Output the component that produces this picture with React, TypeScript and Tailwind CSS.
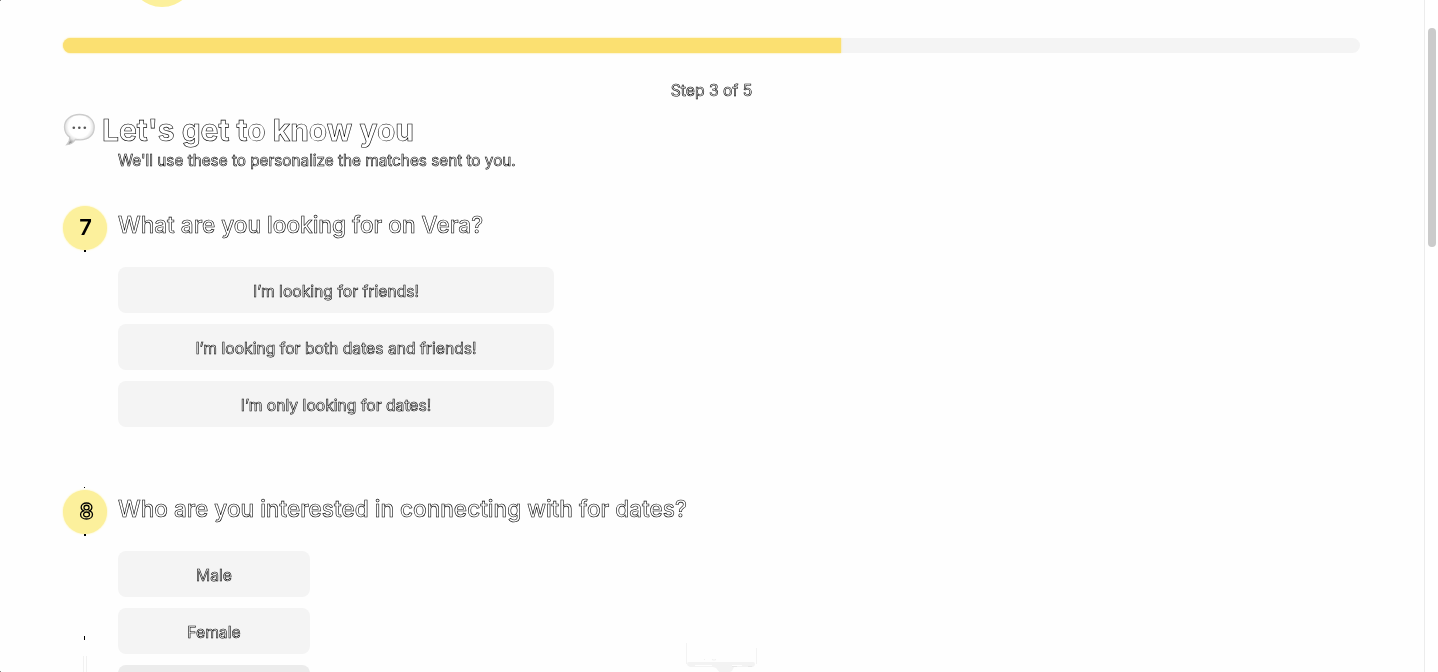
import type { ReactNode } from "react";

const outlineLarge = "text-white [-webkit-text-stroke:0.6px_#000000]";
const outlineSmall = "text-[#fafafa] [-webkit-text-stroke:0.6px_#000000]";

function SpeechBubble() {
  return (
    <svg width="34" height="34" viewBox="0 0 34 34" className="mt-[2px] shrink-0">
      <defs>
        <radialGradient id="bubble" cx="0.5" cy="0.4" r="0.6">
          <stop offset="0.6" stopColor="#ffffff" />
          <stop offset="0.8" stopColor="#e2e2e2" />
          <stop offset="1" stopColor="#999999" />
        </radialGradient>
      </defs>
      <path
        d="M16.500 1.5C8 1.5 1.5 6.8 1.5 14c0 4.700 2 8 5.300 10.100C7 27 5.800 29.500 3.800 31.700c3.600-.2 6.600-2 8.500-5.200 1.500.3 3 .4 4.700.4 9 0 14.200-5.400 14.200-12.700S25.500 1.500 16.500 1.500Z"
        fill="url(#bubble)"
        stroke="#cccccc"
        strokeWidth="1.300"
      />
      <circle cx="10.800" cy="14.800" r="1.300" fill="#555" />
      <circle cx="16.300" cy="14.800" r="1.300" fill="#555" />
      <circle cx="21.800" cy="14.800" r="1.300" fill="#555" />
    </svg>
  );
}

function Option({ label, dim = false }: { label: string; dim?: boolean }) {
  return (
    <button
      className={`flex h-[46px] w-full shrink-0 items-center justify-center rounded-lg pt-1 text-[15.7px] leading-6 font-normal ${dim ? "bg-[#ececec]" : "bg-[#f4f4f4]"}`}
    >
      <span className={outlineSmall}>{label}</span>
    </button>
  );
}

function Question({
  n,
  title,
  digit,
  marks,
  children,
}: {
  n: number;
  title: string;
  digit: string;
  marks: ReactNode;
  children: ReactNode;
}) {
  return (
    <section className="flex h-[284px] shrink-0 gap-[11px]">
      <div className="relative flex w-11 shrink-0 flex-col items-center">
        <div
          className={`mt-px flex h-11 w-11 items-center justify-center rounded-full bg-[#fcf09c] text-[22px] font-semibold shadow-[0_0_2px_#fcf09c] ${digit}`}
        >
          {n}
        </div>
        {marks}
      </div>
      <div className="flex flex-col">
        <h2 className="flex h-[40px] items-center text-[22.6px] font-medium whitespace-nowrap">
          <span className={outlineLarge}>{title}</span>
        </h2>
        <div className="mt-[22px] flex flex-col gap-[11px]">{children}</div>
      </div>
    </section>
  );
}

export default function App() {
  return (
    <div className="flex h-[672px] w-[1438px] overflow-hidden bg-[#fefefe] font-['Inter',sans-serif]">
      <main className="relative flex w-[1425px] shrink-0 flex-col overflow-hidden border-r border-[#ececec] pr-16 pl-[63px] will-change-transform">
        <div className="absolute top-[-59px] left-[129px] h-[66px] w-[66px] rounded-full bg-[#fcf09c]" />
        <div className="absolute top-[-1px] left-[-1px] h-[2px] w-[2px] bg-[#888]" />
        <div className="absolute bottom-0 left-0 h-px w-px bg-[#888]" />
        <div className="mt-[38px] flex h-[15px] shrink-0 rounded-full bg-[#f4f4f4]">
          <div className="w-[60%] rounded-l-full bg-[#fbe071] shadow-[0_0_2px_#fbe071]" />
        </div>
        <p className={`mt-[26px] h-6 shrink-0 text-center text-[15.7px] leading-6 ${outlineSmall}`}>Step 3 of 5</p>
        <header className="h-[102px] shrink-0 pt-2">
          <h1 className="flex h-[38px] gap-[5px] text-[30px] leading-[38px] font-bold">
            <SpeechBubble />
            <span className={outlineLarge}>Let's get to know you</span>
          </h1>
          <p className={`pl-[55px] text-[15.3px] leading-6 ${outlineSmall}`}>
            We'll use these to personalize the matches sent to you.
          </p>
        </header>

        <Question
          n={7}
          title="What are you looking for on Vera?"
          digit="pb-[2px] pl-px text-black"
          marks={<i className="absolute top-[45px] left-[21px] h-[2px] w-[2px] bg-black" />}
        >
          <div className="flex w-[436px] flex-col gap-[11px]">
            <Option label="I’m looking for friends!" />
            <Option label="I’m looking for both dates and friends!" />
            <Option label="I’m only looking for dates!" />
          </div>
        </Question>
        <Question
          n={8}
          title="Who are you interested in connecting with for dates?"
          digit="pb-px pl-[3px] text-[#fcf09c] [-webkit-text-stroke:1.3px_#000000]"
          marks={
            <>
              <i className="absolute top-[-2px] left-[21px] h-px w-px bg-black" />
              <i className="absolute top-[45px] left-[21px] h-[2px] w-[2px] bg-black" />
              <i className="absolute top-[147px] left-[21px] h-1 w-px bg-black" />
              <i className="absolute top-[167px] left-[20px] h-4 w-1 border-x border-[#f1f1f1]" />
            </>
          }
        >
          <div className="flex w-48 flex-col gap-[11px]">
            <Option label="Male" />
            <Option label="Female" />
            <Option label="" dim />
          </div>
        </Question>

        <svg className="absolute top-[642px] left-[684px]" width="76" height="30" viewBox="0 0 76 30" fill="none">
          <path d="M2.500 1v21M72.500 6v16" stroke="#f3f3f3" />
          <path d="M5 20h64q2 0 2 2t-2 3H50l-2 4-4 2h-8l-4-5-3-1H6q-3-1-3-3t2-2Z" fill="#f3f3f3" />
          <path d="M11 23.500h17M48 23.500h10" stroke="#fefefe" />
          <path d="M48 24.500h5M64 24.500h4" stroke="#e8e8e8" />
          <path d="M28.500 17v1h3v-1M20 17.500h1" stroke="#f1f1f1" />
        </svg>
      </main>
      <aside className="flex w-[13px] justify-center bg-white pt-7 pl-px">
        <div className="h-[219px] w-2 rounded-full bg-[#cbcbcb]" />
      </aside>
    </div>
  );
}
